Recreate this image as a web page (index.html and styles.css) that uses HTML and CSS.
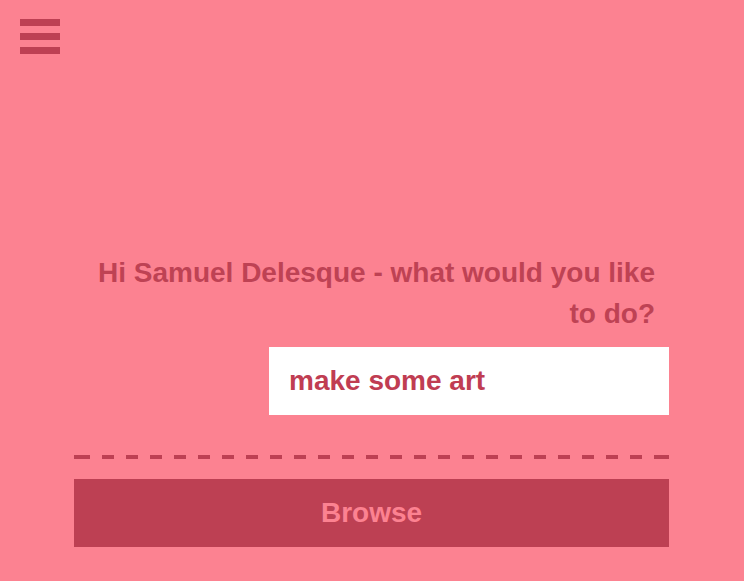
FILE: index.html
```html
<!DOCTYPE html>
<html lang="en">
<head>
<meta charset="utf-8">
<title>Hi Samuel</title>
<link rel="stylesheet" href="styles.css">
</head>
<body>
<header class="top">
  <button class="menu" type="button" aria-label="Menu">
    <span class="menu-bar"></span>
    <span class="menu-bar"></span>
    <span class="menu-bar"></span>
  </button>
</header>
<main class="panel">
  <h1 class="greeting">Hi Samuel Delesque - what would you like to do?</h1>
  <div class="field">
    <input class="field-input" type="text" value="make some art">
  </div>
  <div class="divider"></div>
  <button class="browse" type="button">Browse</button>
</main>
</body>
</html>
```
FILE: styles.css
```css
html, body {
  margin: 0;
  padding: 0;
}
body {
  background: #fc8291;
  font-family: "Liberation Sans", Arial, sans-serif;
  font-weight: bold;
  color: #bd4053;
  min-height: 100vh;
}
.top {
  padding: 19px 20px 0;
  height: 35px;
}
.menu {
  display: flex;
  flex-direction: column;
  gap: 7px;
  width: 40px;
  padding: 0;
  margin: 0;
  border: 0;
  background: none;
  cursor: pointer;
}
.menu-bar {
  display: block;
  width: 40px;
  height: 7px;
  background: #bd4053;
}
.panel {
  margin: 198px 0 0 74px;
  width: 595px;
  display: flex;
  flex-direction: column;
}
.greeting {
  margin: 0;
  padding-right: 14px;
  font-size: 28px;
  line-height: 41px;
  font-weight: bold;
  text-align: right;
  color: #be4254;
}
.field {
  margin-top: 13px;
  display: flex;
  justify-content: flex-end;
}
.field-input {
  box-sizing: border-box;
  width: 400px;
  height: 68px;
  border: 0;
  outline: none;
  background: #ffffff;
  padding: 0 20px;
  font-family: "Liberation Sans", Arial, sans-serif;
  font-weight: bold;
  font-size: 28px;
  color: #c03d52;
}
.divider {
  margin-top: 40px;
  height: 4px;
  background:
    linear-gradient(to right, #bd4053 16px, transparent 16px),
    linear-gradient(to left, #bd4053 15px, transparent 15px),
    repeating-linear-gradient(to right, transparent 0 4px, #bd4053 4px 16px, transparent 16px 24px);
}
.browse {
  margin-top: 20px;
  height: 68px;
  width: 100%;
  border: 0;
  background: #bd4053;
  color: #fc8291;
  font-family: "Liberation Sans", Arial, sans-serif;
  font-weight: bold;
  font-size: 28px;
  cursor: pointer;
}
```
